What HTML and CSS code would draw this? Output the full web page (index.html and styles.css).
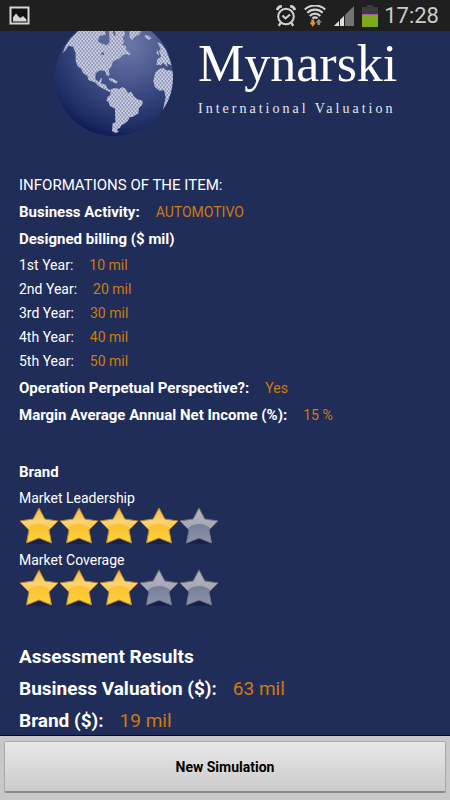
FILE: index.html
```
<!DOCTYPE html>
<html lang="en">
<head>
    <meta charset="UTF-8">
    <meta name="viewport" content="width=device-width, initial-scale=1.0">
    <title>Mynarski International Valuation</title>
    <link rel="stylesheet" href="styles.css">
</head>
<body>
    <!-- shared shapes -->
    <svg class="defs" width="0" height="0" aria-hidden="true">
        <defs>
            <linearGradient id="goldTop" x1="0" y1="0" x2="0" y2="1">
                <stop offset="0" stop-color="#f3b843"/>
                <stop offset="0.4" stop-color="#fbd470"/>
                <stop offset="1" stop-color="#f0b034"/>
            </linearGradient>
            <linearGradient id="goldLow" x1="0" y1="0" x2="0" y2="1">
                <stop offset="0" stop-color="#f9bf34"/>
                <stop offset="1" stop-color="#ffd93c"/>
            </linearGradient>
            <linearGradient id="greyTop" x1="0" y1="0" x2="0" y2="1">
                <stop offset="0" stop-color="#b4b6bd"/>
                <stop offset="1" stop-color="#9a9eae"/>
            </linearGradient>
            <linearGradient id="greyLow" x1="0" y1="0" x2="0" y2="1">
                <stop offset="0" stop-color="#777e99"/>
                <stop offset="1" stop-color="#9298b0"/>
            </linearGradient>
            <clipPath id="starClip">
                <path d="M20 2 L25.800 13 L39 15 L30 24 L32.500 37 L20 32 L7.500 37 L10 24 L1 15 L14.200 13 Z"/>
            </clipPath>
            <symbol id="starOn" viewBox="0 0 40 38">
                <path d="M8 38 L20 32 L32 38 Z" fill="#18224a"/>
                <g clip-path="url(#starClip)">
                    <rect width="40" height="38" fill="url(#goldTop)"/>
                    <ellipse cx="20" cy="29" rx="14" ry="11" fill="url(#goldLow)"/>
                </g>
                <path d="M20 2 L25.800 13 L39 15 L30 24 L32.500 37 L20 32 L7.500 37 L10 24 L1 15 L14.200 13 Z" fill="none" stroke="#b8862f" stroke-linejoin="round"/>
            </symbol>
            <symbol id="starOff" viewBox="0 0 40 38">
                <path d="M8 38 L20 32 L32 38 Z" fill="#18224a"/>
                <g clip-path="url(#starClip)">
                    <rect width="40" height="38" fill="url(#greyTop)"/>
                    <ellipse cx="20" cy="29" rx="14" ry="11" fill="url(#greyLow)"/>
                </g>
                <path d="M20 2 L25.800 13 L39 15 L30 24 L32.500 37 L20 32 L7.500 37 L10 24 L1 15 L14.200 13 Z" fill="none" stroke="#72747d" stroke-linejoin="round"/>
            </symbol>
        </defs>
    </svg>

    <div class="status-bar">
        <svg class="icon-picture" width="22" height="20" viewBox="0 0 22 20" aria-hidden="true">
            <rect x="1.500" y="1.500" width="18" height="16" fill="#111" stroke="#d6d6d6" stroke-width="2"/>
            <path d="M4 15.500 V11.500 L7 7.500 L10 11 L11.500 12 L14 10 L17.500 13.500 V15.500 Z" fill="#d6d6d6"/>
        </svg>
        <div class="status-icons">
            <svg width="20" height="22" viewBox="0 0 20 22" fill="none" stroke="#d2d2d2" aria-hidden="true">
                <circle cx="10" cy="11.500" r="7.800" stroke-width="2"/>
                <path d="M6.500 10.500 L9.500 13.500 L14 9.500" stroke-width="2"/>
                <path d="M1.300 5.200 A4 4 0 0 1 5.800 1.500 M18.700 5.200 A4 4 0 0 0 14.200 1.500" stroke-width="2.800"/>
                <path d="M4.500 18 L2.800 20.800 M15.500 18 L17.200 20.800" stroke-width="2.400"/>
            </svg>
            <svg width="22" height="22" viewBox="0 0 22 22" fill="none" stroke="#d2d2d2" aria-hidden="true">
                <path d="M.8 4.500 A15 15 0 0 1 21.200 4.500 M3.300 7.800 A11 11 0 0 1 18.700 7.800 M5.800 11 A7 7 0 0 1 16.200 11 M8.500 13.500 A3.500 3.500 0 0 1 13.500 13.500" stroke-width="2.200"/>
                <path d="M7.300 14.500 H10.200 V17.500 H12 L8.750 21.800 L5.500 17.500 H7.300 Z" fill="#e29232" stroke="none"/>
                <path d="M13.500 20 V17.500 H11.700 L14.800 13.700 L17.900 17.500 H16.100 V20 Z" fill="#8f8f8f" stroke="none"/>
            </svg>
            <svg width="20" height="20" viewBox="0 0 20 20" aria-hidden="true">
                <path d="M20 0 V20 H0 Z" fill="#737373"/>
                <path d="M10 10 V20 H0 Z" fill="#e0e0e0"/>
                <path d="M5.500 14 V20 M10.500 9 V20" stroke="#1f1f1f"/>
            </svg>
            <svg width="16" height="22" viewBox="0 0 16 22" aria-hidden="true">
                <path d="M5 0 H11 V2 H16 V22 H0 V2 H5 Z" fill="#3c3c3c"/>
                <rect y="10" width="16" height="12" fill="#7bab1b"/>
                <rect y="9" width="16" height="1" fill="#a05ab0"/>
            </svg>
        </div>
        <time class="clock">17:28</time>
    </div>

    <main class="content">
        <header class="brand-header">
            <svg class="globe" width="120" height="106" viewBox="163 93 360 318" role="img" aria-label="Globe">
                <defs>
                    <radialGradient id="sea" gradientUnits="userSpaceOnUse" cx="385" cy="135" r="290">
                        <stop offset="0" stop-color="#6b77a6"/>
                        <stop offset="0.300" stop-color="#525f93"/>
                        <stop offset="0.600" stop-color="#34427a"/>
                        <stop offset="0.850" stop-color="#1e2d64"/>
                        <stop offset="1" stop-color="#0b184f"/>
                    </radialGradient>
                    <pattern id="dots" width="10" height="12" patternUnits="userSpaceOnUse">
                        <rect width="10" height="12" fill="#939bba"/>
                        <g fill="#d3d7e7">
                            <circle cx="2.500" cy="3" r="3"/>
                            <circle cx="7.500" cy="9" r="3"/>
                        </g>
                    </pattern>
                    <clipPath id="globeClip">
                        <circle cx="343" cy="231" r="177"/>
                    </clipPath>
                </defs>
                <circle cx="343" cy="231" r="177" fill="url(#sea)"/>
                <g clip-path="url(#globeClip)" fill="url(#dots)">
                    <path d="M188 160 L198 137 L212 116 L236 93 H374 L376 105 L369 112 L373 127 L366 135 L378 137 L380 150 L392 160 L390 166 L380 162 L368 166 L360 175 L343 182 L338 188 L336 199 L327 209 L330 225 L322 229 L316 213 L301 211 L288 220 L287 238 L298 246 L303 234 L307 236 L304 250 L318 254 L324 266 L335 271 L330 276 L314 268 L296 258 L286 247 L267 241 L263 228 L250 218 L245 207 L234 198 L228 184 L228 159 L220 140 L207 137 L196 153 Z"/>
                    <path d="M329 233 L342 237 L354 245 L350 251 L338 245 L328 239 Z"/>
                    <path d="M334 267 L347 264 L358 267 L369 261 L379 268 L384 278 L396 276 L402 289 L414 298 L429 302 L428 314 L418 324 L416 340 L400 350 L390 352 L384 363 L374 371 L365 376 L361 384 L352 387 L357 396 L347 399 L337 393 L339 369 L347 368 L346 326 L331 318 L326 305 L320 302 L324 290 L331 286 Z"/>
                    <path d="M467 217 L480 206 L492 204 L499 211 L514 211 L525 220 L525 270 L504 314 L490 329 L498 291 L493 271 L479 272 L465 260 L461 242 Z"/>
                    <path d="M472 126 L485 132 L498 148 L507 170 L516 196 L507 193 L501 187 L504 202 L490 188 L483 196 L470 194 L473 178 L484 170 L478 153 L483 147 Z"/>
                    <path d="M390 93 H425 L418 105 L405 110 L398 120 L389 112 Z"/>
                    <path d="M435 105 L448 107 L456 116 L446 119 L436 112 Z"/>
                    <path d="M472 149 L477 157 L478 167 L471 160 Z"/>
                </g>
                <path d="M294 124 L300 108 L318 104 L316 93 H328 L330 126 L322 136 L307 131 Z M303 159 L311 156 L314 163 L307 166 Z M340 93 H346 L348 108 L342 106 Z" fill="#59669a"/>
            </svg>
            <div class="brand-text">
                <h1>Mynarski</h1>
                <p>International Valuation</p>
            </div>
        </header>

        <section class="info">
            <h2>INFORMATIONS OF THE ITEM:</h2>
            <dl>
                <div class="row"><dt>Business Activity:</dt><dd>AUTOMOTIVO</dd></div>
            </dl>
            <h3>Designed billing ($ mil)</h3>
            <dl class="years">
                <div class="row"><dt>1st Year:</dt><dd>10 mil</dd></div>
                <div class="row"><dt>2nd Year:</dt><dd>20 mil</dd></div>
                <div class="row"><dt>3rd Year:</dt><dd>30 mil</dd></div>
                <div class="row"><dt>4th Year:</dt><dd>40 mil</dd></div>
                <div class="row"><dt>5th Year:</dt><dd>50 mil</dd></div>
            </dl>
            <dl>
                <div class="row"><dt>Operation Perpetual Perspective?:</dt><dd>Yes</dd></div>
                <div class="row"><dt>Margin Average Annual Net Income (%):</dt><dd>15 %</dd></div>
            </dl>
        </section>

        <section class="ratings">
            <h3>Brand</h3>
            <p>Market Leadership</p>
            <div class="stars" role="img" aria-label="4 of 5 stars">
                <svg><use href="#starOn"/></svg>
                <svg><use href="#starOn"/></svg>
                <svg><use href="#starOn"/></svg>
                <svg><use href="#starOn"/></svg>
                <svg><use href="#starOff"/></svg>
            </div>
            <p>Market Coverage</p>
            <div class="stars" role="img" aria-label="3 of 5 stars">
                <svg><use href="#starOn"/></svg>
                <svg><use href="#starOn"/></svg>
                <svg><use href="#starOn"/></svg>
                <svg><use href="#starOff"/></svg>
                <svg><use href="#starOff"/></svg>
            </div>
        </section>

        <section class="results">
            <h2>Assessment Results</h2>
            <dl>
                <div class="row"><dt>Business Valuation ($):</dt><dd>63 mil</dd></div>
                <div class="row"><dt>Brand ($):</dt><dd>19 mil</dd></div>
            </dl>
        </section>
    </main>

    <footer class="bottom-bar">
        <button type="button">New Simulation</button>
    </footer>
</body>
</html>
```
FILE: styles.css
```
* {
    box-sizing: border-box;
}

body {
    display: flex;
    flex-direction: column;
    height: 100vh;
    margin: 0;
    overflow: hidden;
    background-color: #202d59;
    color: #fff;
    font-family: Roboto, sans-serif;
}

h1, h2, h3, p, dl, dd {
    margin: 0;
}

.defs {
    position: absolute;
}

/* status bar */
.status-bar {
    display: flex;
    flex: none;
    align-items: center;
    height: 31px;
    padding: 0 11px 0 9px;
    background-color: #1f1f1f;
}

.status-icons {
    display: flex;
    align-items: center;
    gap: 8px;
    margin-left: auto;
}

.clock {
    margin-left: 6px;
    color: #cbcbcb;
    font-size: 22px;
    line-height: 31px;
}

/* page content */
.content {
    flex: 1;
    min-height: 0;
    overflow: hidden;
}

.brand-header {
    display: flex;
    gap: 24px;
    height: 106px;
    padding-left: 54px;
}

.globe {
    flex: none;
}

.brand-text {
    padding-top: 3px;
}

.brand-text h1 {
    font-family: "Liberation Serif", serif;
    font-size: 52px;
    font-weight: normal;
    line-height: 60px;
}

.brand-text p {
    color: #e4e7f0;
    font-family: "Liberation Serif", serif;
    font-size: 14px;
    letter-spacing: 3px;
    line-height: 30px;
    white-space: nowrap;
}

.info {
    padding: 35px 19px 0;
    font-size: 15px;
    line-height: 27px;
}

.info h2 {
    font-size: 15px;
    font-weight: normal;
}

.info h3,
.ratings h3 {
    font-size: 15px;
    font-weight: bold;
}

.row {
    display: flex;
    gap: 16px;
}

.row dt {
    font-weight: bold;
}

.row dd {
    color: #d07a0c;
}

.info dd {
    font-size: 14px;
}

.years {
    padding-bottom: 2px;
    font-size: 14px;
    line-height: 24px;
}

.years dt {
    font-weight: normal;
}

.ratings {
    padding: 30px 19px 0;
    font-size: 14px;
    line-height: 24px;
}

.ratings h3 {
    line-height: 27px;
}

.stars {
    display: flex;
    height: 42px;
    margin-top: -4px;
}

.stars svg {
    width: 40px;
    height: 38px;
}

.results {
    padding: 31px 19px 0;
    font-size: 19px;
    line-height: 32px;
}

.results h2 {
    font-size: 19px;
    font-weight: bold;
}

/* bottom button */
.bottom-bar {
    flex: none;
    height: 65px;
    padding: 5px 4px 6px;
    border-top: 1px solid #02024a;
    background-color: #c8c8c8;
}

.bottom-bar button {
    width: 100%;
    height: 52px;
    border: 1px solid #a8a8a8;
    border-bottom: 2px solid #8a8a8a;
    border-radius: 2px;
    background: linear-gradient(#e8e8e8, #cbcbcb);
    color: #000;
    font-family: Roboto, sans-serif;
    font-size: 14px;
    font-weight: bold;
    cursor: pointer;
}
```
